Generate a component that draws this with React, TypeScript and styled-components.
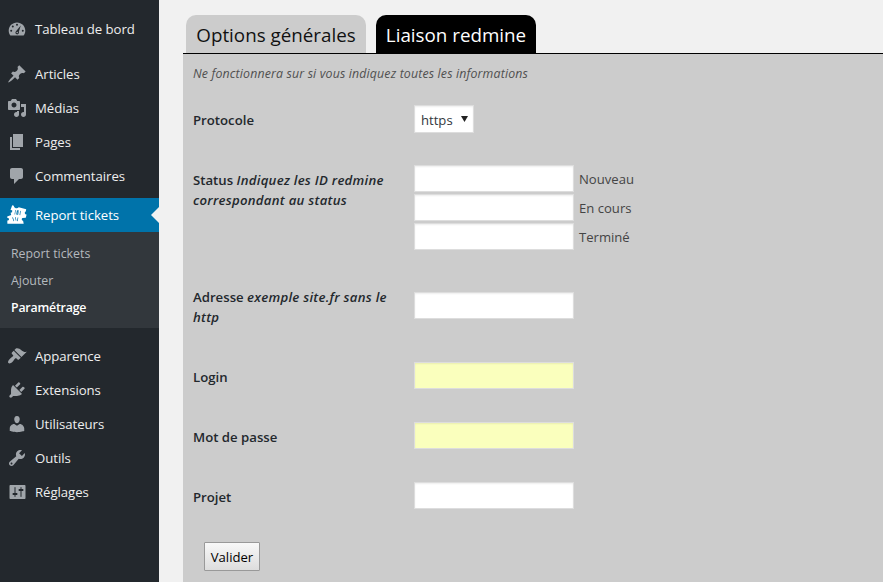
import React from 'react';
import styled, { createGlobalStyle, css } from 'styled-components';

const GlobalStyle = createGlobalStyle`
  *, *::before, *::after { box-sizing: border-box; }
  body {
    margin: 0;
    background: #f1f1f1;
    color: #444;
    font-family: "Open Sans", "Noto Sans", sans-serif;
    font-size: 13px;
    overflow: hidden;
  }
`;

const Page = styled.div`
  display: flex;
  height: 582px;
`;

const Sidebar = styled.nav`
  flex: 0 0 159px;
  padding-top: 12px;
  background: #23282d;
`;

const MenuGroup = styled.ul<{ $gap?: number }>`
  list-style: none;
  margin: 0 0 ${(p) => p.$gap ?? 0}px;
  padding: 0;
`;

const MenuItem = styled.li<{ $current?: boolean }>`
  position: relative;
  display: flex;
  align-items: center;
  height: 34px;
  padding-left: 7px;
  color: #eee;
  font-size: 13.2px;
  line-height: 18px;
  letter-spacing: -0.05px;
  white-space: nowrap;
  ${(p) =>
    p.$current &&
    css`
      background: #0073aa;
      color: #fff;
      &::after {
        content: '';
        position: absolute;
        right: 0;
        top: 9px;
        border: 8px solid transparent;
        border-left: 0;
        border-right-color: #f1f1f1;
      }
    `}
`;

const MenuIcon = styled.svg<{ $current?: boolean }>`
  flex: none;
  width: 20px;
  height: 20px;
  margin-right: 8px;
  fill: ${(p) => (p.$current ? '#fff' : '#a0a5aa')};
`;

const SubMenu = styled.ul`
  list-style: none;
  margin: 0 0 11px;
  padding: 8px 0 7px;
  background: #32373c;
`;

const SubItem = styled.li<{ $current?: boolean }>`
  height: 27px;
  padding-left: 11px;
  font-size: 12.35px;
  line-height: 27px;
  color: ${(p) => (p.$current ? '#fff' : '#b4b9be')};
  font-weight: ${(p) => (p.$current ? 600 : 400)};
  letter-spacing: ${(p) => (p.$current ? '-0.2px' : '0')};
`;

const Main = styled.main`
  flex: 1;
  display: flex;
  flex-direction: column;
  padding: 15px 0 0 24px;
`;

const Tabs = styled.div`
  display: flex;
  gap: 10px;
  height: 39px;
  padding-left: 3px;
  border-bottom: 1px solid #000;
`;

const Tab = styled.button<{ $active?: boolean }>`
  height: 38px;
  width: ${(p) => (p.$active ? 160 : 180)}px;
  padding: 0;
  border: 0;
  border-radius: 10px 10px 0 0;
  background: ${(p) => (p.$active ? '#000' : '#ccc')};
  color: ${(p) => (p.$active ? '#fff' : '#111')};
  font: 18.8px/40px "Open Sans", sans-serif;
  white-space: nowrap;
`;

const Panel = styled.form`
  flex: 1;
  padding-left: 10px;
  background: #ccc;
`;

const Notice = styled.p`
  margin: 0;
  height: 36px;
  padding-top: 10px;
  font-size: 12.35px;
  line-height: 19px;
  letter-spacing: 0.15px;
  font-style: italic;
  color: #505050;
`;

const FormRow = styled.div<{ $height?: number }>`
  display: grid;
  grid-template-columns: 221px 1fr;
  height: ${(p) => p.$height ?? 60}px;
`;

const RowLabel = styled.label`
  padding-top: 20px;
  color: #23282d;
  font-size: 13.2px;
  font-weight: 580;
  line-height: 20px;
  em { letter-spacing: 0.26px; }
`;

const Fields = styled.div<{ $top?: number }>`
  display: flex;
  flex-direction: column;
  gap: 2px;
  padding-top: ${(p) => p.$top ?? 15}px;
`;

const Field = styled.div`
  display: flex;
  align-items: center;
  gap: 5px;
  height: 27px;
  font-size: 13.1px;
  line-height: 20px;
`;

const TextInput = styled.input<{ $filled?: boolean }>`
  width: 160px;
  height: 27px;
  padding: 3px 5px;
  border: 1px solid #ddd;
  box-shadow: inset 0 1px 2px rgba(0, 0, 0, 0.07);
  background: ${(p) => (p.$filled ? '#faffbd' : '#fff')};
  outline: 0;
`;

const SelectBox = styled.div`
  display: flex;
  align-items: center;
  width: 60px;
  height: 28px;
  padding: 2px 5px 0 6px;
  border: 1px solid #ddd;
  background: #fff;
  box-shadow: inset 0 1px 2px rgba(0, 0, 0, 0.07);
  color: #32373c;
  font-size: 13.1px;
  line-height: 20px;
`;

const Caret = styled.svg`
  width: 7px;
  height: 6px;
  margin: -3px 0 0 auto;
  fill: #222;
`;

const Submit = styled.button`
  display: block;
  width: 56px;
  height: 29px;
  margin: 15px 0 0 11px;
  padding: 1px 0 0;
  border: 1px solid #999;
  border-radius: 1px;
  background: linear-gradient(#f8f8f8, #ddd);
  color: #000;
  font: 13.1px/20px "Open Sans", sans-serif;
`;

const PATHS = {
  dashboard:
    'M3.400 16.500h13.200C17.700 15.200 18.300 13.500 18.300 11.700 18.300 7.100 14.600 3.500 10 3.500S1.700 7.100 1.700 11.700c0 1.800.6 3.500 1.700 4.800zM9 5.800a1 1 0 1 1 2 0 1 1 0 1 1-2 0zM4.800 7.600a1 1 0 1 1 2 0 1 1 0 1 1-2 0zM3.200 11.800a1 1 0 1 1 2 0 1 1 0 1 1-2 0zM14.800 11.800a1 1 0 1 1 2 0 1 1 0 1 1-2 0zM13.800 6.600l-2 6.200c.5.9.1 2.500-1.600 2.600-1.700 0-2.400-2-1.200-3.100zM10.200 12.700a.8.8 0 1 0 0 1.600.8.8 0 0 0 0-1.600z',
  pin: 'M10.44 3.02l1.82-1.82 6.36 6.35-1.83 1.82c-1.05-.68-2.48-.57-3.41.36l-.75.75c-.92.93-1.04 2.35-.35 3.41l-1.83 1.82-2.41-2.41-2.8 2.79c-.42.42-3.38 2.71-3.8 2.29s1.86-3.39 2.28-3.81l2.79-2.79L4.1 9.36l1.83-1.82c1.05.69 2.48.57 3.4-.36l.75-.75c.93-.92 1.05-2.35.36-3.41z',
  media:
    'M13 11V4c0-.55-.45-1-1-1h-1.67L9 1H5L3.67 3H2c-.55 0-1 .45-1 1v7c0 .55.45 1 1 1h10c.55 0 1-.45 1-1zM7 4.5c1.38 0 2.5 1.12 2.5 2.5S8.38 9.5 7 9.5 4.5 8.38 4.5 7 5.62 4.5 7 4.5zM14 6h5v10.5c0 1.38-1.12 2.5-2.5 2.5S14 17.88 14 16.5s1.12-2.5 2.5-2.5c.17 0 .34.02.5.05V9h-3V6zm-4 8.05V13h2v3.5c0 1.38-1.12 2.5-2.5 2.5S7 17.88 7 16.5 8.12 14 9.5 14c.17 0 .34.02.5.05z',
  page: 'M6 15V2h10v13H6zm-1 1h8v2H3V5h2v11z',
  comment: 'M5 2h9c1.1 0 2 .9 2 2v7c0 1.1-.9 2-2 2h-2l-5 5v-5H5c-1.1 0-2-.9-2-2V4c0-1.1.9-2 2-2z',
  tickets:
    'M5.200.3L6.800.8C6.800 2 7.600 3 8.800 3.200c1.200.3 2.200 0 2.900-.9l7.500 2-.4 2.200c-.9.4-1.200 1.100-.9 1.900.2.700.9 1.200 1.700 1.200l-.8 3.100-3.400.3c-.6.400-.8 1-.6 1.700.2.700.6 1 1.300 1.100l.6 3H.4l-.1-3.200c1 0 1.700-.5 1.700-1.300S1.400 13 .4 13l-.2-1.400 4-1.600-.6-2.200 1.500-.5.100-2-1.700-.4zM8.200 5l-.7 4.400.6.1.7-4.400zM10 5.200l-.8 4.200 1.900.3.8-4.200zm1 .7l-.5 3 .3.100.5-3.100zM13.200 5.800l-.7 4.300.7.100.6-4.300zM5.200 12.500l1.400 3.700.6-.3-1.300-3.600zm2.800-.3l.8 3.600.6-.2-.8-3.500zm2.600.2l-.6 3.700.7.200.6-3.700z',
  appearance:
    'M14.48 11.06L7.41 3.99l1.5-1.5c.5-.56 2.3-.47 3.51.32 1.21.8 1.43 1.28 2.91 2.1 1.18.64 2.45 1.26 4.45.85zm-.71.71L6.7 4.7 4.93 6.47c-.39.39-.39 1.02 0 1.41l1.06 1.06c.39.39.39 1.03 0 1.42-.6.6-1.43 1.11-2.21 1.69-.35.26-.7.53-1.01.84C1.43 14.23.4 16.08 1.4 17.07c.99 1 2.84-.03 4.18-1.36.31-.31.58-.66.85-1.02.57-.78 1.08-1.61 1.69-2.21.39-.39 1.02-.39 1.41 0l1.06 1.06c.39.39 1.02.39 1.41 0z',
  plugin:
    'M13.11 4.36L9.87 7.6 8 5.73l3.24-3.24c.35-.34 1.05-.2 1.56.32.52.51.66 1.21.31 1.55zm-8 1.77l.91-1.12 9.01 9.01-1.19.84c-.71.71-2.63 1.16-3.82 1.16H6.14L4.9 17.26c-.59.59-1.54.59-2.12 0-.59-.58-.59-1.53 0-2.12l1.24-1.24v-3.88c0-1.13.4-3.19 1.09-3.89zm7.26 3.97l3.24-3.24c.34-.35 1.04-.21 1.55.31.52.51.66 1.21.31 1.55l-3.24 3.25z',
  user: 'M10 9.25c-2.27 0-2.73-3.44-2.73-3.44C7 4.02 7.82 2 9.97 2c2.16 0 2.98 2.02 2.71 3.81 0 0-.41 3.44-2.68 3.44zm0 2.57L12.72 10c2.39 0 4.52 2.33 4.52 4.53v2.49s-3.65 1.13-7.24 1.13c-3.65 0-7.24-1.13-7.24-1.13v-2.49c0-2.25 1.94-4.48 4.47-4.48z',
  tools:
    'M16.68 9.77c-1.34 1.34-3.3 1.67-4.95.99l-5.41 6.52c-.99.99-2.59.99-3.58 0s-.99-2.59 0-3.57l6.52-5.42c-.68-1.65-.35-3.61.99-4.95 1.28-1.28 3.12-1.62 4.72-1.06l-2.89 2.89 2.82 2.82 2.86-2.87c.53 1.58.18 3.39-1.08 4.65zM3.81 16.21c.4.39 1.04.39 1.43 0 .4-.4.4-1.04 0-1.43-.39-.4-1.03-.4-1.43 0-.39.39-.39 1.03 0 1.43z',
  settings:
    'M18.500 16V4c0-.55-.45-1-1-1h-14c-.55 0-1 .45-1 1v12c0 .55.45 1 1 1h14c.55 0 1-.45 1-1zM8.500 11h1c.55 0 1 .45 1 1s-.45 1-1 1h-1v1.500c0 .28-.22.5-.5.5s-.5-.22-.5-.5V13h-1c-.55 0-1-.45-1-1s.45-1 1-1h1V5.500c0-.28.22-.5.5-.5s.5.22.5.5V11zm5-2h-1c-.55 0-1-.45-1-1s.45-1 1-1h1V5.500c0-.28.22-.5.5-.5s.5.22.5.5V7h1c.55 0 1 .45 1 1s-.45 1-1 1h-1v5.500c0 .28-.22.5-.5.5s-.5-.22-.5-.5V9z',
};

type IconName = keyof typeof PATHS;

const Item = ({ icon, label, current }: { icon: IconName; label: string; current?: boolean }) => (
  <MenuItem $current={current}>
    <MenuIcon $current={current} viewBox="0 0 20 20" aria-hidden="true">
      <path fillRule="evenodd" d={PATHS[icon]} />
    </MenuIcon>
    {label}
  </MenuItem>
);

const STATUSES = ['Nouveau', 'En cours', 'Terminé'];

export default function App() {
  return (
    <>
      <GlobalStyle />
      <Page>
        <Sidebar>
          <MenuGroup $gap={11}>
            <Item icon="dashboard" label="Tableau de bord" />
          </MenuGroup>
          <MenuGroup $gap={5}>
            <Item icon="pin" label="Articles" />
            <Item icon="media" label="Médias" />
            <Item icon="page" label="Pages" />
            <Item icon="comment" label="Commentaires" />
          </MenuGroup>
          <MenuGroup>
            <Item icon="tickets" label="Report tickets" current />
          </MenuGroup>
          <SubMenu>
            <SubItem>Report tickets</SubItem>
            <SubItem>Ajouter</SubItem>
            <SubItem $current>Paramétrage</SubItem>
          </SubMenu>
          <MenuGroup>
            <Item icon="appearance" label="Apparence" />
            <Item icon="plugin" label="Extensions" />
            <Item icon="user" label="Utilisateurs" />
            <Item icon="tools" label="Outils" />
            <Item icon="settings" label="Réglages" />
          </MenuGroup>
        </Sidebar>
        <Main>
          <Tabs>
            <Tab type="button">Options générales</Tab>
            <Tab type="button" $active>Liaison redmine</Tab>
          </Tabs>
          <Panel>
            <Notice>Ne fonctionnera sur si vous indiquez toutes les informations</Notice>
            <FormRow>
              <RowLabel>Protocole</RowLabel>
              <Fields>
                <SelectBox>
                  https
                  <Caret viewBox="0 0 7 6" aria-hidden="true"><path d="M0 0h7L3.500 6z" /></Caret>
                </SelectBox>
              </Fields>
            </FormRow>
            <FormRow $height={117}>
              <RowLabel>Status <em>Indiquez les ID redmine<br />correspondant au status</em></RowLabel>
              <Fields>
                {STATUSES.map((status) => (
                  <Field key={status}>
                    <TextInput aria-label={status} />
                    {status}
                  </Field>
                ))}
              </Fields>
            </FormRow>
            <FormRow $height={80}>
              <RowLabel>Adresse <em>exemple site.fr sans le<br />http</em></RowLabel>
              <Fields $top={25}><TextInput /></Fields>
            </FormRow>
            <FormRow>
              <RowLabel>Login</RowLabel>
              <Fields><TextInput $filled /></Fields>
            </FormRow>
            <FormRow>
              <RowLabel>Mot de passe</RowLabel>
              <Fields><TextInput type="password" $filled /></Fields>
            </FormRow>
            <FormRow>
              <RowLabel>Projet</RowLabel>
              <Fields><TextInput /></Fields>
            </FormRow>
            <Submit type="button">Valider</Submit>
          </Panel>
        </Main>
      </Page>
    </>
  );
}
